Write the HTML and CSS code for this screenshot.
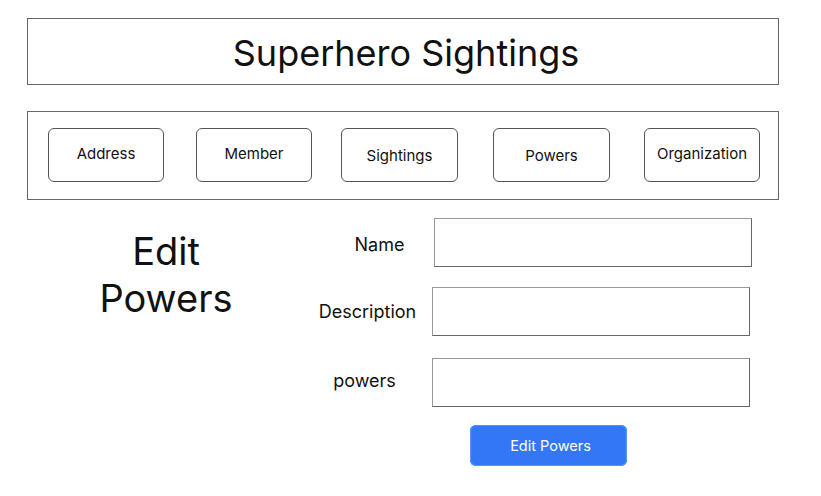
FILE: index.html
```html
<!DOCTYPE html>
<html lang="en">
<head>
<meta charset="utf-8">
<title>Superhero Sightings</title>
<link rel="stylesheet" href="styles.css">
</head>
<body>
<div class="page">
  <header class="title-box">
    <h1 class="title">Superhero Sightings</h1>
  </header>
  <nav class="nav-box">
    <a class="nav-btn" href="#">Address</a>
    <a class="nav-btn nav-member" href="#">Member</a>
    <a class="nav-btn nav-sight" href="#">Sightings</a>
    <a class="nav-btn nav-powers" href="#">Powers</a>
    <a class="nav-btn nav-org" href="#">Organization</a>
  </nav>
  <main class="main">
    <div class="side">
      <h2 class="heading">Edit<br>Powers</h2>
    </div>
    <form class="form">
      <div class="row row-name">
        <label class="label label-name">Name</label>
        <input class="field field-name" type="text">
      </div>
      <div class="row row-desc">
        <label class="label label-desc">Description</label>
        <input class="field" type="text">
      </div>
      <div class="row row-pow">
        <label class="label label-pow">powers</label>
        <input class="field" type="text">
      </div>
      <div class="actions">
        <button class="submit" type="button">Edit Powers</button>
      </div>
    </form>
  </main>
</div>
</body>
</html>
```
FILE: styles.css
```css
* { box-sizing: border-box; }
html, body { margin: 0; padding: 0; background: #fff; }
body {
  font-family: Inter, "Noto Sans", sans-serif;
  color: #111;
}
.page {
  width: 752px;
  margin-left: 27px;
  padding-top: 18px;
}
.title-box {
  height: 67px;
  border: 1px solid #666;
  display: flex;
  align-items: center;
  justify-content: center;
  padding-left: 6px;
}
.title {
  margin: 0;
  font-weight: 400;
  font-size: 36px;
  line-height: 42px;
  padding-top: 2px;
}
.nav-box {
  margin-top: 26px;
  height: 89px;
  border: 1px solid #666;
  display: flex;
  align-items: flex-start;
  padding: 16px 0 0 20px;
}
.nav-btn {
  width: 116px;
  height: 54px;
  border: 1px solid #555;
  border-radius: 6px;
  display: flex;
  align-items: center;
  justify-content: center;
  font-size: 15px;
  color: #111;
  text-decoration: none;
  padding-bottom: 3px;
}
.nav-member { margin-left: 32px; }
.nav-sight { margin-left: 29px; width: 117px; padding-bottom: 0; padding-top: 1px; }
.nav-powers { margin-left: 35px; width: 117px; padding-bottom: 0; }
.nav-org { margin-left: 34px; }
.main {
  display: flex;
  margin-top: 18px;
}
.side {
  width: 278px;
  text-align: center;
}
.heading {
  margin: 10px 0 0;
  font-weight: 400;
  font-size: 38px;
  line-height: 47px;
}
.form {
  flex: 1;
  display: flex;
  flex-direction: column;
}
.row {
  display: flex;
  align-items: center;
}
.row-desc { margin-top: 20px; }
.row-pow { margin-top: 22px; }
.label {
  width: 127px;
  text-align: center;
  font-size: 18px;
}
.label-name { padding-left: 22px; padding-top: 4px; }
.label-desc { padding-right: 2px; }
.label-pow { padding-right: 8px; padding-bottom: 4px; }
.field {
  width: 318px;
  height: 49px;
  border: 1px solid #666;
  border-top-color: #999;
  border-left-color: #999;
  border-radius: 0;
  background: #fff;
  padding: 0;
  margin: 0;
}
.field-name { margin-left: 2px; }
.actions {
  margin-top: 18px;
  padding-left: 165px;
}
.submit {
  width: 157px;
  height: 41px;
  background: #3377f6;
  border: none;
  border-radius: 6px;
  box-shadow: inset 0 0 0 1px #5a93f7, inset 8px 0 0 -6px #1a8cff, inset -8px 0 0 -6px #1a8cff;
  color: #fff;
  font-family: Inter, "Noto Sans", sans-serif;
  font-size: 14.5px;
  padding: 0 0 0 4px;
}
```
